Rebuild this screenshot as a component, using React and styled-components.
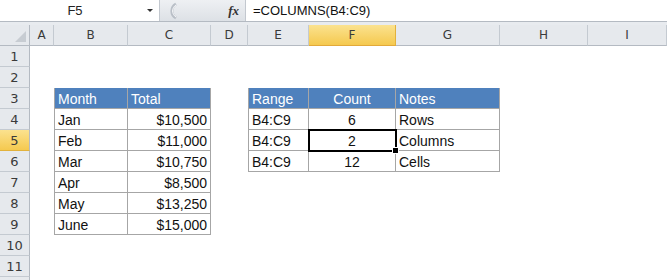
import React from 'react';
import styled, { createGlobalStyle, css } from 'styled-components';

const GlobalStyle = createGlobalStyle`
	html, body {
		margin: 0;
		padding: 0;
		background: #ffffff;
		overflow: hidden;
	}
	* {
		box-sizing: border-box;
	}
`;

const COLUMNS = [
	{ key: 'A', width: 24 },
	{ key: 'B', width: 74 },
	{ key: 'C', width: 83 },
	{ key: 'D', width: 37 },
	{ key: 'E', width: 61 },
	{ key: 'F', width: 87 },
	{ key: 'G', width: 104 },
	{ key: 'H', width: 88 },
	{ key: 'I', width: 79 },
];

const ACTIVE_COL = 'F';
const ACTIVE_ROW = 5;

// cell contents, keyed by row then column
const DATA = {
	3: { B: ['Month'], C: ['Total'], E: ['Range'], F: ['Count', 'center'], G: ['Notes'] },
	4: { B: ['Jan'], C: ['$10,500', 'right'], E: ['B4:C9'], F: ['6', 'center'], G: ['Rows'] },
	5: { B: ['Feb'], C: ['$11,000', 'right'], E: ['B4:C9'], F: ['2', 'center'], G: ['Columns'] },
	6: { B: ['Mar'], C: ['$10,750', 'right'], E: ['B4:C9'], F: ['12', 'center'], G: ['Cells'] },
	7: { B: ['Apr'], C: ['$8,500', 'right'] },
	8: { B: ['May'], C: ['$13,250', 'right'] },
	9: { B: ['June'], C: ['$15,000', 'right'] },
};

// bordered tables on the sheet
const TABLES = [
	{ cols: ['B', 'C'], top: 3, bottom: 9 },
	{ cols: ['E', 'F', 'G'], top: 3, bottom: 6 },
];

const ROWS = [1, 2, 3, 4, 5, 6, 7, 8, 9, 10, 11, 12];

const Page = styled.div`
	width: 667px;
	height: 280px;
	overflow: hidden;
	display: flex;
	flex-direction: column;
	font-family: 'Liberation Sans', Arial, sans-serif;
`;

const FormulaBar = styled.div`
	display: flex;
	height: 22px;
	flex-shrink: 0;
	border-bottom: 1px solid #b4bac2;
	background: #dfe3e8;
`;

const NameBox = styled.div`
	width: 160px;
	display: flex;
	align-items: center;
	background: #ffffff;
	border-right: 1px solid #c3c8cf;
	font-size: 13px;
	color: #222;
`;

const NameText = styled.span`
	flex: 1;
	text-align: center;
	padding-left: 3px;
`;

const DropArrow = styled.span`
	width: 0;
	height: 0;
	margin-right: 6px;
	border-left: 3px solid transparent;
	border-right: 3px solid transparent;
	border-top: 3px solid #333;
`;

const BarTools = styled.div`
	width: 86px;
	display: flex;
	align-items: center;
	justify-content: space-between;
	padding: 0 6px 0 2px;
	background: linear-gradient(#eef0f3, #dde1e6);
	border-right: 1px solid #c3c8cf;
`;

const FxLabel = styled.span`
	font-family: 'Liberation Serif', 'Times New Roman', serif;
	font-style: italic;
	font-weight: bold;
	font-size: 13px;
	color: #333;
`;

const FormulaInput = styled.div`
	flex: 1;
	display: flex;
	align-items: center;
	padding-left: 7px;
	background: #ffffff;
	font-size: 13px;
	color: #111;
`;

const Gap = styled.div`
	height: 3px;
	flex-shrink: 0;
	background: #e8ebef;
`;

const Sheet = styled.div`
	display: grid;
	grid-template-columns: 30px ${COLUMNS.map(c => c.width + 'px').join(' ')};
	grid-auto-rows: 21px;
`;

const headerBase = css`
	display: flex;
	align-items: center;
	justify-content: center;
	font-family: 'DejaVu Sans', 'Noto Sans', sans-serif;
	font-size: 12px;
	color: #3a3a3a;
	background: ${p => (p.$selected ? 'linear-gradient(#fbe28f, #f5c94f)' : '#e6e9ed')};
`;

const Corner = styled.div`
	position: relative;
	background: #e6e9ed;
	border-right: 1px solid #b4bac2;
	border-bottom: 1px solid #b4bac2;

	&::after {
		content: '';
		position: absolute;
		right: 3px;
		bottom: 3px;
		width: 0;
		height: 0;
		border-left: 11px solid transparent;
		border-bottom: 11px solid #c7ccd2;
	}
`;

const ColHeader = styled.div`
	${headerBase}
	border-right: 1px solid ${p => (p.$selected ? '#e2b23c' : '#c4cad1')};
	border-bottom: 1px solid ${p => (p.$selected ? '#e2a93a' : '#b4bac2')};
`;

const RowHeader = styled.div`
	${headerBase}
	font-size: 13px;
	border-right: 1px solid #b4bac2;
	border-bottom: 1px solid ${p => (p.$selected ? '#e2b23c' : '#c4cad1')};
`;

const Cell = styled.div`
	position: relative;
	display: flex;
	align-items: center;
	justify-content: ${p => (p.$align === 'right' ? 'flex-end' : p.$align === 'center' ? 'center' : 'flex-start')};
	padding: 2px 3px 0 3px;
	font-size: 14px;
	white-space: nowrap;
	color: ${p => (p.$head ? '#ffffff' : '#111111')};
	background: ${p => (p.$head ? '#4f81bd' : '#ffffff')};
	${p => p.$bordered && css`
		border-right: 1px solid #a6a6a6;
		border-bottom: 1px solid #a6a6a6;
	`}
	${p => p.$first && css`
		border-left: 1px solid #a6a6a6;
	`}
	${p => p.$active && css`
		z-index: 2;
		outline: 2px solid #000000;
		outline-offset: -1px;

		&::after {
			content: '';
			position: absolute;
			right: -4px;
			bottom: -4px;
			width: 5px;
			height: 5px;
			background: #000000;
			border: 1px solid #ffffff;
		}
	`}
`;

const Grip = () => (
	<svg width="16" height="18" viewBox="0 0 16 18">
		<path d="M14 2 A8 8 0 0 0 14 16" fill="none" stroke="#b9bfc7" strokeWidth="3" />
		<path d="M14 3 A7 7 0 0 0 14 15" fill="none" stroke="#f7f8fa" strokeWidth="1" />
	</svg>
);

const tableFor = (col, row) =>
	TABLES.find(t => t.cols.includes(col) && row >= t.top && row <= t.bottom);

const App = () => {
	return (
		<Page>
			<GlobalStyle />
			<FormulaBar>
				<NameBox>
					<NameText>F5</NameText>
					<DropArrow />
				</NameBox>
				<BarTools>
					<Grip />
					<FxLabel>fx</FxLabel>
				</BarTools>
				<FormulaInput>=COLUMNS(B4:C9)</FormulaInput>
			</FormulaBar>
			<Gap />
			<Sheet>
				<Corner />
				{COLUMNS.map(c => (
					<ColHeader key={c.key} $selected={c.key === ACTIVE_COL}>
						{c.key}
					</ColHeader>
				))}
				{ROWS.map(row => (
					<React.Fragment key={row}>
						<RowHeader $selected={row === ACTIVE_ROW}>{row}</RowHeader>
						{COLUMNS.map(c => {
							const table = tableFor(c.key, row);
							const entry = (DATA[row] && DATA[row][c.key]) || [];
							return (
								<Cell
									key={c.key}
									$align={entry[1]}
									$bordered={!!table}
									$first={table && table.cols[0] === c.key}
									$head={table && row === table.top}
									$active={c.key === ACTIVE_COL && row === ACTIVE_ROW}
								>
									{entry[0]}
								</Cell>
							);
						})}
					</React.Fragment>
				))}
			</Sheet>
		</Page>
	);
};

export default App;
